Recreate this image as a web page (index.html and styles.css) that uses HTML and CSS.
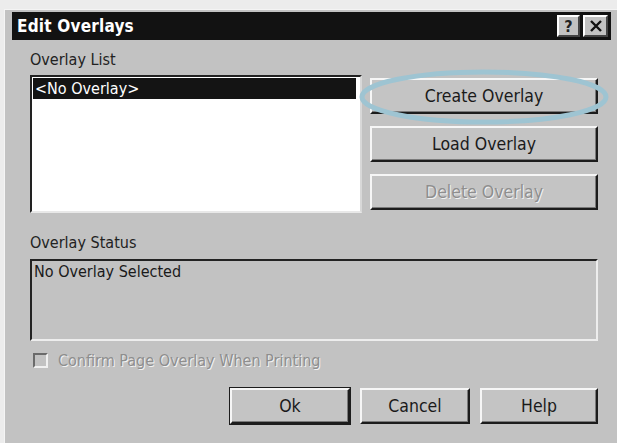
FILE: index.html
```html
<!DOCTYPE html>
<html lang="en">
<head>
    <meta charset="UTF-8">
    <title>Edit Overlays</title>
    <link rel="stylesheet" href="styles.css">
</head>
<body>

<div class="dialog">
    <div class="titlebar">
        <span class="title">Edit Overlays</span>
        <span class="tbtn">?</span>
        <span class="tbtn close">
            <svg width="14" height="12" viewBox="0 0 14 12"><path d="M2 1 L12 11 M12 1 L2 11" stroke="#111" stroke-width="2.4"/></svg>
        </span>
    </div>

    <div class="content">
        <div class="top">
            <div class="listcol">
                <div class="label">Overlay List</div>
                <div class="listbox">
                    <div class="item selected">&lt;No Overlay&gt;</div>
                </div>
            </div>
            <div class="btncol">
                <button class="btn">Create Overlay</button>
                <button class="btn">Load Overlay</button>
                <button class="btn disabled">Delete Overlay</button>
            </div>
        </div>

        <div class="label status-label">Overlay Status</div>
        <div class="statusbox">No Overlay Selected</div>

        <div class="checkrow">
            <span class="checkbox"></span>
            <span class="disabled-text">Confirm Page Overlay When Printing</span>
        </div>

        <div class="bottom">
            <button class="btn ok default">Ok</button>
            <button class="btn cancel">Cancel</button>
            <button class="btn help">Help</button>
        </div>
    </div>

    <svg class="highlight" width="260" height="70" viewBox="0 0 260 70">
        <ellipse cx="126" cy="32" rx="122" ry="25" fill="none" stroke="#9ec4d2" stroke-width="5"/>
    </svg>
</div>

</body>
</html>
```

FILE: styles.css
```css
* {
    box-sizing: border-box;
    margin: 0;
    padding: 0;
}
body {
    width: 617px;
    height: 443px;
    overflow: hidden;
    background: #ececec;
    font-family: "DejaVu Sans Condensed", "DejaVu Sans", sans-serif;
    font-stretch: condensed;
    color: #1a1a1a;
}
.dialog {
    position: relative;
    margin: 9px 0 0 4px;
    height: 434px;
    background: #c2c2c2;
    border-top: 1px solid #f4f4f4;
    border-left: 1px solid #f4f4f4;
}
.titlebar {
    margin: 2px 6px 0 7px;
    height: 28px;
    background: #121212;
    display: flex;
    align-items: center;
    padding: 0 3px 0 5px;
    gap: 3px;
}
.title {
    flex: 1;
    color: #fff;
    font-weight: bold;
    font-size: 17px;
    letter-spacing: 0.2px;
}
.tbtn {
    width: 23px;
    height: 22px;
    background: #c2c2c2;
    border: 2px solid;
    border-color: #fff #444 #444 #fff;
    display: flex;
    align-items: center;
    justify-content: center;
    font-weight: bold;
    font-size: 16px;
    color: #222;
}
.close {
    width: 25px;
}
.content {
    padding: 10px 19px 0 25px;
}
.top {
    display: flex;
    gap: 8px;
}
.listcol {
    width: 332px;
}
.label {
    font-size: 16px;
    height: 20px;
    line-height: 20px;
    margin-bottom: 5px;
    color: #222;
}
.listbox {
    height: 138px;
    background: #fff;
    border: 2px solid;
    border-color: #222 #d8d8d8 #e8e8e8 #222;
    padding: 1px 4px 0 1px;
}
.item {
    font-size: 16px;
    height: 21px;
    line-height: 21px;
    padding-left: 2px;
}
.selected {
    background: #141414;
    color: #fff;
}
.btncol {
    flex: 1;
    padding-top: 28px;
    display: flex;
    flex-direction: column;
    gap: 12px;
}
.btn {
    height: 36px;
    background: #c4c4c4;
    border: 2px solid;
    border-color: #f6f6f6 #1c1c1c #1c1c1c #f6f6f6;
    box-shadow: inset -1px -1px 0 #7a7a7a;
    font-family: inherit;
    font-stretch: condensed;
    font-size: 17.5px;
    color: #1a1a1a;
}
.btn.disabled {
    color: #8e8e8e;
    text-shadow: 1px 1px 0 #f2f2f2;
}
.status-label {
    margin-top: 20px;
    margin-bottom: 6px;
}
.statusbox {
    height: 82px;
    border: 2px solid;
    border-color: #222 #ededed #ededed #222;
    font-size: 16px;
    line-height: 20px;
    padding: 1px 2px;
}
.checkrow {
    display: flex;
    align-items: center;
    gap: 10px;
    margin-top: 10px;
    height: 18px;
    padding-left: 3px;
}
.checkbox {
    width: 15px;
    height: 15px;
    border: 2px solid;
    border-color: #6a6a6a #f0f0f0 #f0f0f0 #6a6a6a;
    background: #c2c2c2;
}
.disabled-text {
    font-size: 16px;
    color: #8e8e8e;
    text-shadow: 1px 1px 0 #f2f2f2;
}
.bottom {
    display: flex;
    justify-content: flex-end;
    gap: 10px;
    margin-top: 19px;
}
.ok {
    width: 120px;
}
.cancel {
    width: 110px;
}
.help {
    width: 118px;
}
.default {
    outline: 1px solid #1c1c1c;
}
.highlight {
    position: absolute;
    left: 353px;
    top: 55px;
}
```
